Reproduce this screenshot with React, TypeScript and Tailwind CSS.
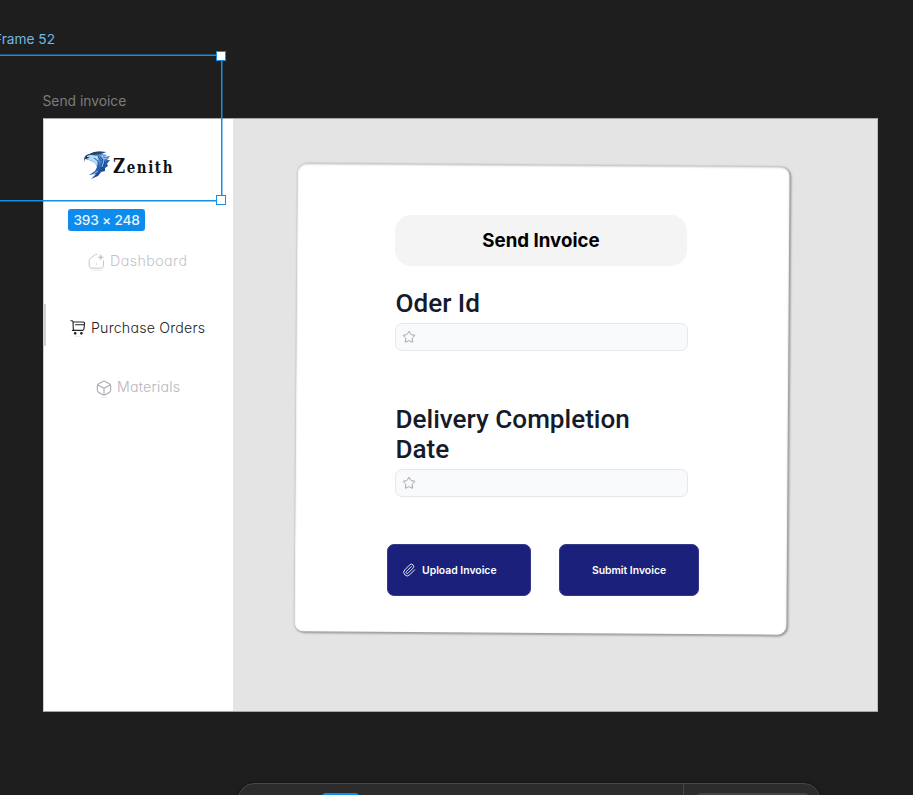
import React from "react";
import { Paperclip, Star } from "lucide-react";

function EagleLogo() {
  return (
    <svg width="28" height="30" viewBox="0 0 28 30" fill="none" className="shrink-0">
      <defs>
        <linearGradient id="wing" x1="4" y1="3" x2="22" y2="26" gradientUnits="userSpaceOnUse">
          <stop offset="0" stopColor="#1d3557" />
          <stop offset="0.4" stopColor="#65a0dc" />
          <stop offset="0.65" stopColor="#2862b6" />
          <stop offset="1" stopColor="#142c68" />
        </linearGradient>
      </defs>
      <path d="M1 10C1 6 4 4 7 4C11 1 17 1 23 2L19 4L24 5L21 7L27 6L24 10L27 10L24 14L25 16L22 18L22 21L18 22L15 26L8 29L13 24L6 25L12 21L14 17L12 13L6 10L2 9L1 12Z" fill="url(#wing)" />
      <path d="M4 6C9 4 12 6 15 6C15 9 16 13 14 17C13 12 9 11 4 9Z" fill="#b9dcf5" />
      <path d="M6 4C12 1 16 1 23 2L17 4L10 5Z" fill="#23476f" />
      <path d="M11 8L15 11L15 19M17 7L20 10L18 19M15 6L18 11M20 8L22 12L19 20" stroke="#194b98" strokeWidth="0.9" />
      <path d="M2 6.5L7 7.5L4 8.5Z" fill="#18283e" />
      <path d="M19 5L21 10L19 17M21 9L24 8M9 25L15 21" stroke="#d9edff" strokeWidth="0.7" />
    </svg>
  );
}

function HomeIcon() {
  return (
    <svg width="17" height="18" viewBox="0 0 17 18" fill="none" stroke="#c4c4c8" strokeWidth="1" strokeLinecap="round" strokeLinejoin="round" className="mt-[2px]">
      <path d="M9 1.6C8.3 1.2 7.6 1.3 7 1.7L2.5 5.3C1.6 6 1.2 6.8 1.2 7.8V12.2C1.2 14.2 2.3 15.2 4.2 15.2H12.5C14.5 15.2 15.5 14.2 15.5 12.2V8" />
      <path d="M12.8 1.5L13.6 3.5L15.6 4.3L13.6 5.1L12.8 7.1L12 5.1L10 4.3L12 3.5Z" fill="#c4c4c8" strokeWidth=".4" />
      <path d="M8.4 10.5V11.5" strokeWidth=".8" />
      <path d="M3.5 17.3H13.5" stroke="#e9e9eb" />
    </svg>
  );
}

function CartIcon() {
  return (
    <svg width="16" height="18" viewBox="0 0 16 18" fill="none" stroke="#252525" strokeWidth="1.15" strokeLinecap="round" strokeLinejoin="round" className="mt-[2px]">
      <path d="M.9 1.7H2.2Q3 1.7 3 2.7L3.3 9.7Q3.4 11.4 5 11.4H12Q13.8 11.4 14 9.7L14.5 4.3Q14.6 3 13.2 3H3.1M5.5 5.7H14M2.4 11.4H12.5" />
      <circle cx="5.2" cy="14.3" r=".8" fill="#252525" />
      <circle cx="11.4" cy="14.3" r=".8" fill="#252525" />
      <path d="M5 17.3H11" stroke="#eeeeef" />
    </svg>
  );
}

function CubeIcon() {
  return (
    <svg width="16" height="18" viewBox="0 0 16 18" fill="none" stroke="#aaa9b1" strokeWidth="1.1" strokeLinecap="round" strokeLinejoin="round" className="mt-[3px]">
      <path d="M6.8 1.4Q8 .7 9.2 1.4L13.6 3.9Q14.7 4.5 14.7 5.8V10.3Q14.7 11.5 13.6 12.2L9.2 14.7Q8 15.4 6.8 14.7L2.4 12.2Q1.3 11.5 1.3 10.3V5.8Q1.3 4.5 2.4 3.9ZM1.8 4.9L8 8.3L14.2 4.9M8 8.3V15" />
      <path d="M5 17.3H11" stroke="#eeeeef" />
    </svg>
  );
}

function Field({ label }: { label: string }) {
  return (
    <label className="block">
      <span className="block w-[260px] pl-[0.5px] font-['Roboto',sans-serif] text-[26.1px] font-medium leading-[30px] text-[#141b2a]">{label}</span>
      <span className="mt-[5px] flex h-7 w-[293px] items-center rounded-[7px] border border-[#e5e7eb] bg-[#f9fafc] pl-[6px]">
        <Star size={14} strokeWidth={1.7} className="text-[#a3a2aa]" />
      </span>
    </label>
  );
}

export default function App() {
  return (
    <main className="relative h-[795px] w-[913px] overflow-hidden bg-[#1e1e1e] font-['Inter',sans-serif]">
      <div className="ml-[42.5px] flex h-[118px] items-end pb-2">
        <span className="text-[13.8px] leading-[18px] text-[#7d7d7d]">Send invoice</span>
      </div>
      <section className="ml-[43px] flex h-[594px] w-[835px] border-x border-t border-b border-t-[#a5a5a5] border-b-[#a5a5a5] border-l-[#cecece] border-r-[#bdbdbd] bg-[#e4e4e4]">
        <aside className="flex w-[188.5px] shrink-0 flex-col bg-white [font-feature-settings:'cv11']">
          <div className="ml-[39px] mt-[31px] flex h-[30px] items-center">
            <EagleLogo />
            <span className="ml-[2px] mt-[2px] inline-block origin-left scale-x-[0.79] whitespace-nowrap font-['DejaVu_Serif',serif] text-[17px] font-bold leading-[30px] tracking-[2px] text-[#111]">
              <span className="text-[21px]">Z</span>enith
            </span>
          </div>
          <div className="ml-[44px] mt-[71px] flex h-[20px] items-center gap-[5px] text-[14.2px] font-light tracking-[0.45px] text-[#c3c3c7]">
            <HomeIcon /><span>Dashboard</span>
          </div>
          <div className="-ml-px mt-[33px] flex h-[42px] items-center border-l-[3px] border-[#cfd2d7]">
            <div className="ml-[24px] mt-[5px] flex items-center gap-[5px] text-[14.2px] font-light tracking-[0.2px] text-[#222]">
              <CartIcon /><span>Purchase Orders</span>
            </div>
          </div>
          <div className="ml-[52px] mt-[31px] flex h-[20px] items-center gap-[5px] text-[14.2px] font-light tracking-[0.2px] text-[#b6b5bc]">
            <CubeIcon /><span>Materials</span>
          </div>
        </aside>
        <div className="relative isolate ml-[63.5px] mt-[46px] h-[468px] w-[492px]">
          <div className="absolute inset-0 -z-10 rotate-[0.4deg] rounded-[9px] bg-white shadow-[1px_1px_2px_1px_rgba(0,0,0,0.3),inset_0_1px_2px_rgba(0,0,0,0.22)]" />
          <div className="flex flex-col pl-[99px] pt-[50px]">
            <h1 className="flex h-[51px] w-[292px] items-center justify-center rounded-[16px] bg-[#f4f4f4] pt-[2px] text-[18.7px] font-bold text-black">Send Invoice</h1>
            <div className="mt-[22px]"><Field label="Oder Id" /></div>
            <div className="mt-[53px]"><Field label="Delivery Completion Date" /></div>
            <div className="-ml-2 mt-[47px] flex gap-[28px] text-[10.4px] font-semibold text-white">
              <button className="flex h-[52px] w-[144px] items-center gap-[6px] rounded-[7px] border border-[#34398a] bg-[#1b217a] pl-[14px]">
                <Paperclip size={14} strokeWidth={1.5} /><span className="pt-[2px]">Upload Invoice</span>
              </button>
              <button className="h-[52px] w-[140px] rounded-[7px] border border-[#34398a] bg-[#1b217a] pt-[2px]">Submit Invoice</button>
            </div>
          </div>
        </div>
      </section>

      <div className="pointer-events-none absolute left-[-171px] top-[55px] h-[146px] w-[393px] border border-[#168ee5] shadow-[0_0_0_0.5px_#168ee5]">
        <span className="absolute -top-[26px] left-[164px] whitespace-nowrap text-[13.7px] leading-[18px] text-[#70b7e6]">Frame 52</span>
        <i className="absolute -right-[5px] -top-[5px] size-[10px] border-[1.5px] border-[#168ee5] bg-white" />
        <i className="absolute -bottom-[5px] -right-[5px] size-[10px] border-[1.5px] border-[#168ee5] bg-white" />
      </div>
      <div className="absolute left-[68px] top-[209px] flex h-[22px] w-[77px] items-center justify-center rounded-[3px] bg-[#0d8ced] pt-px text-[13.7px] font-medium tracking-[-0.2px] text-[#e8f5ff]">393 × 248</div>

      <footer className="absolute left-[238px] top-[783px] flex h-[48px] w-[582px] rounded-[16px] border border-[#464646] bg-[#2c2c2c] shadow-[0_0_3px_rgba(0,0,0,0.5)]">
        <div className="w-[445px] border-r border-[#484848] pl-[82px] pt-[9px]">
          <div className="h-8 w-[39px] rounded-[5px] bg-[#0d8ced]" />
        </div>
        <div className="pl-[11px] pt-[9px]"><div className="h-8 w-[115px] rounded-[6px] bg-[#444]" /></div>
      </footer>
    </main>
  );
}
